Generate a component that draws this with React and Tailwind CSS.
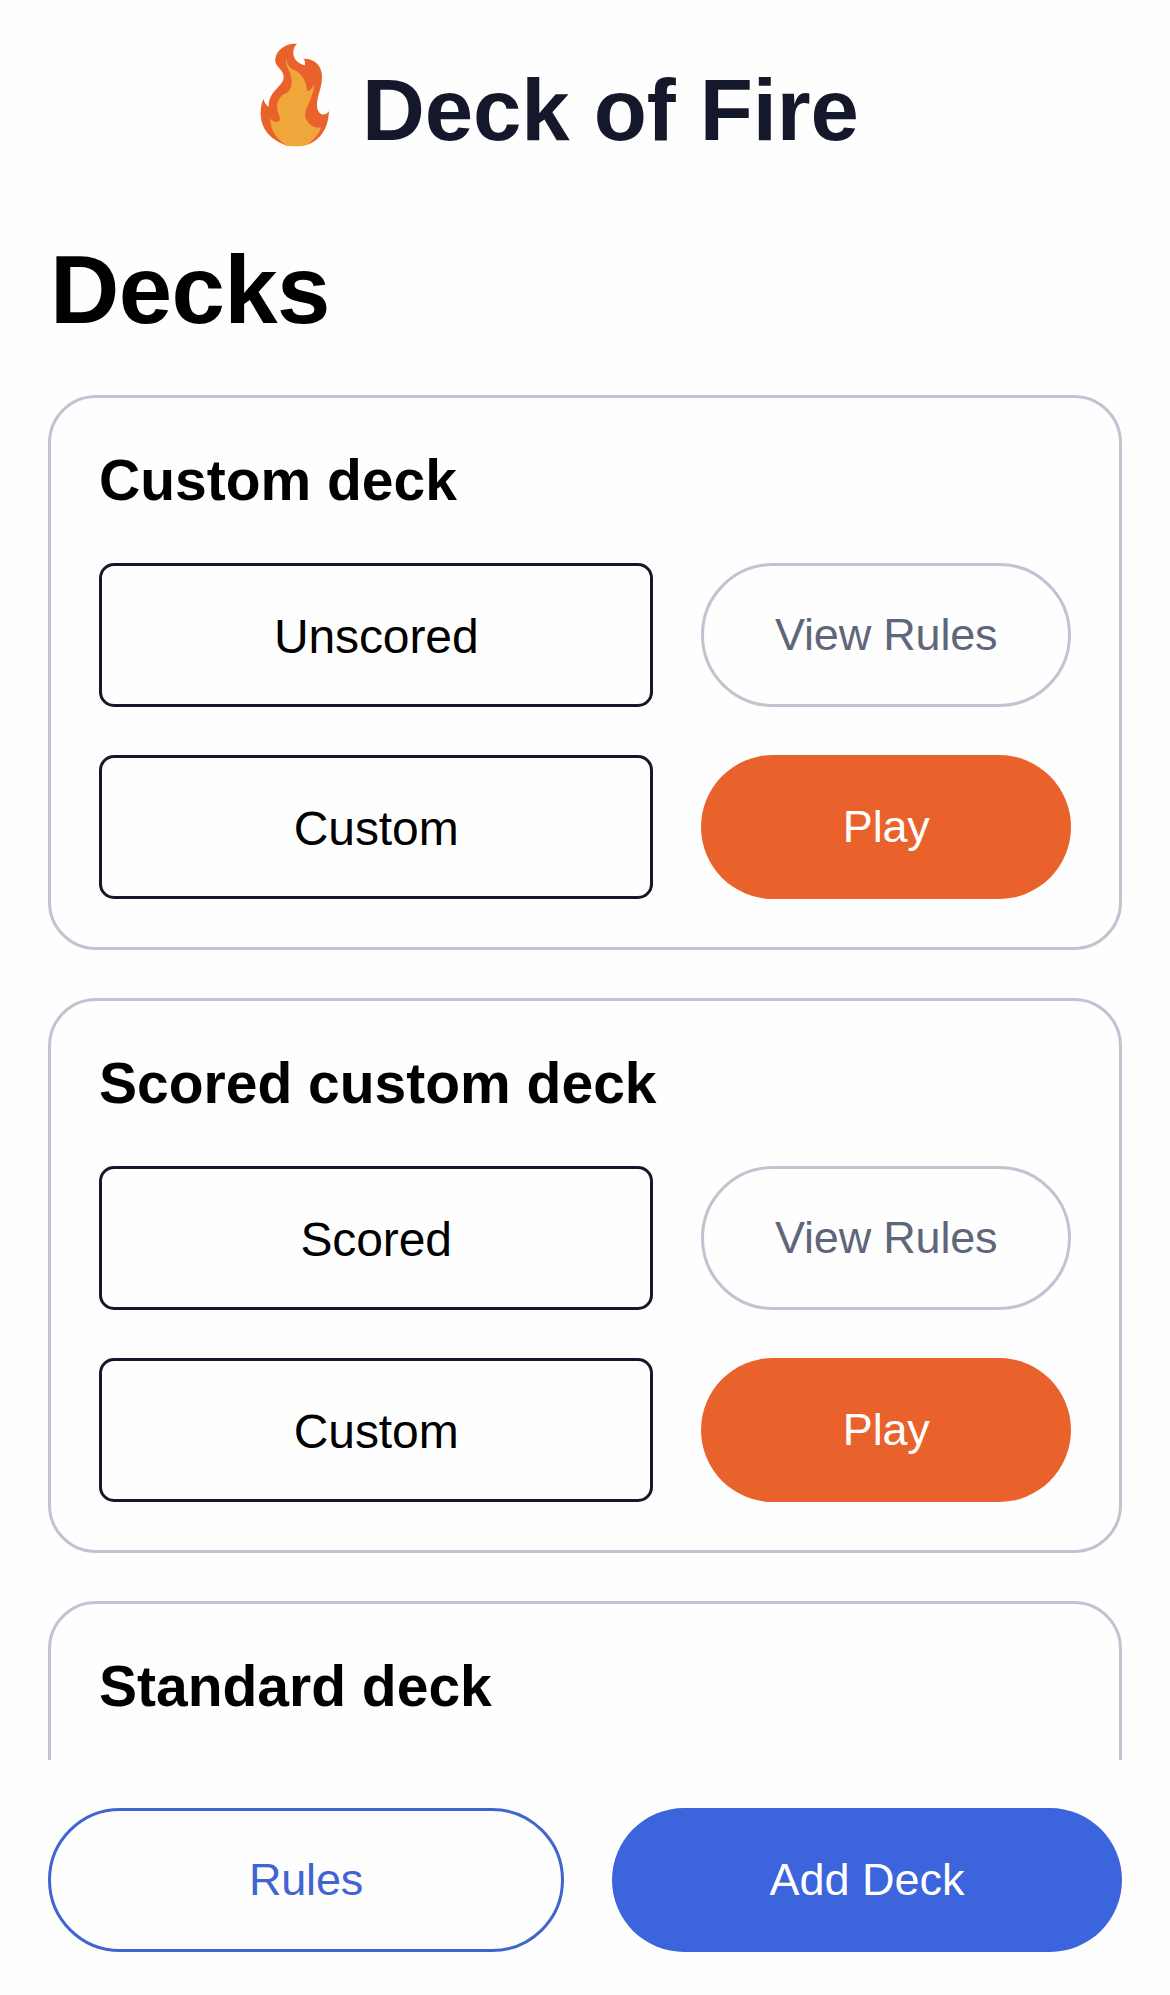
const decks = [
  { name: "Custom deck", scoring: "Unscored", kind: "Custom" },
  { name: "Scored custom deck", scoring: "Scored", kind: "Custom" },
  { name: "Standard deck" },
];

function Flame() {
  return (
    <svg viewBox="54 36 222 318" className="h-[106px] w-[74px] shrink-0" aria-hidden="true">
      <path
        fill="#e9622b"
        d="M171 42C140 38 106 60 106 92C106 112 131 118 131 141C131 170 86 180 86 230C79 227 73 217 70 206C64 222 62 236 62 250C62 300 95 331 140 347L200 345C240 330 264 300 267 243C262 252 252 256 244 252C232 246 229 230 232 212C235 190 246 170 246 140C246 105 222 85 190 86C196 92 196 100 194 106C180 102 162 92 160 72C160 56 164 48 171 42Z"
      />
      <path
        fill="#efa63a"
        d="M140 86C132 104 150 120 154 142C158 167 150 184 138 190C120 198 111 212 111 230C111 248 123 260 119 270C112 280 96 276 91 264C90 300 110 327 136 344C155 350 185 350 202 344C225 327 238 310 243 292C225 298 205 284 197 265C190 236 218 218 223 160C220 172 210 183 201 184C200 150 180 124 156 118C144 108 139 98 140 86Z"
      />
    </svg>
  );
}

function Field({ children }) {
  return (
    <div className="flex h-36 items-center justify-center rounded-[15px] border-3 border-[#15182a] pt-[3px] text-[48px] leading-none tracking-[-0.1px] text-black">
      {children}
    </div>
  );
}

function DeckCard({ deck }) {
  return (
    <section className="min-h-[555px] shrink-0 rounded-[48px] border-3 border-[#c0c4d0] p-12">
      <h2 className="mb-12 text-[57px] leading-[69px] font-bold text-black">{deck.name}</h2>
      {deck.scoring && (
        <div className="grid grid-cols-[3fr_2fr] gap-12">
          <Field>{deck.scoring}</Field>
          <button className="h-36 rounded-[72px] border-3 border-[#c0c4d0] pb-[2px] text-[45px] leading-none tracking-[-0.2px] text-[#5f667a]">
            View Rules
          </button>
          <Field>{deck.kind}</Field>
          <button className="h-36 rounded-[72px] bg-[#ea622b] pb-[2px] text-[45px] leading-none tracking-[-0.2px] text-white">
            Play
          </button>
        </div>
      )}
    </section>
  );
}

export default function App() {
  return (
    <div className="flex h-[1995px] w-[1170px] flex-col overflow-hidden bg-[#fefefe] font-['Liberation_Sans',Arial,sans-serif]">
      <header className="flex h-[220px] shrink-0 items-start gap-[30px] pt-[42px] pl-[258px]">
        <Flame />
        <h1 className="mt-[18px] text-[87px] leading-[100px] font-bold tracking-[-0.1px] text-[#15182a]">Deck of Fire</h1>
      </header>
      <main className="flex h-[1540px] shrink-0 flex-col gap-12 overflow-hidden px-12">
        <h1 className="-mb-12 h-[175px] shrink-0 pt-[15px] pl-[2px] text-[96px] leading-[110px] font-bold tracking-[-0.6px] text-black">
          Decks
        </h1>
        {decks.map((deck) => (
          <DeckCard key={deck.name} deck={deck} />
        ))}
      </main>
      <footer className="flex gap-12 px-12 pt-12">
        <button className="h-36 w-[516px] rounded-[72px] border-3 border-[#4065ce] pb-[2px] text-[45px] leading-none tracking-[-0.2px] text-[#4065d2]">
          Rules
        </button>
        <button className="h-36 flex-1 rounded-[72px] bg-[#3c64dd] pb-[2px] text-[45px] leading-none text-white">Add Deck</button>
      </footer>
    </div>
  );
}
